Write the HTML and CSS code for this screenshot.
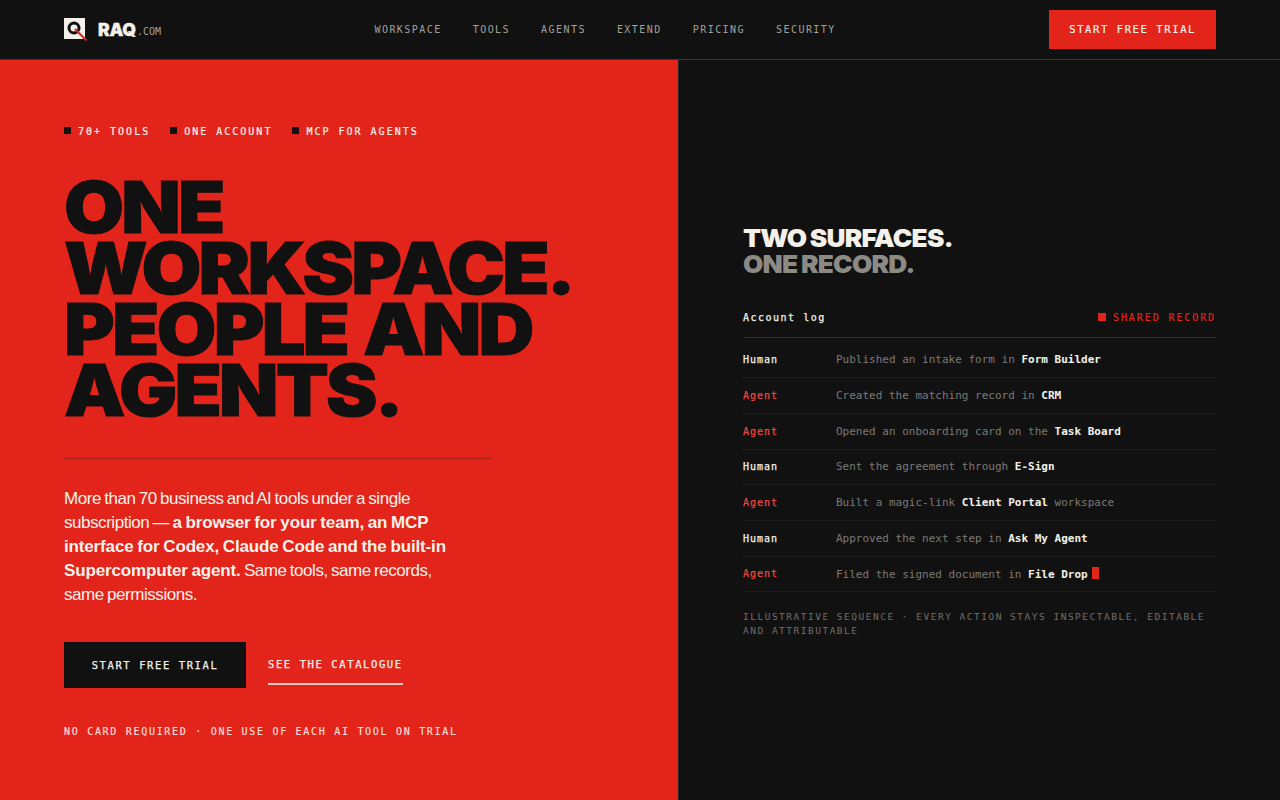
FILE: index.html

```html
<!DOCTYPE html>
<html lang="en">
<head>
  <meta name="viewport" content="width=device-width, initial-scale=1.0">
  <meta charset="UTF-8">
  <title>RAQ.com</title>
  <link rel="stylesheet" href="styles.css">
</head>
<body>
  <header class="topbar">
    <a class="brand" href="#">
      <svg class="brand-mark" width="23" height="23" viewBox="0 0 23 23">
        <rect x="0" y="0" width="21" height="21" fill="#f4f1ea"/>
        <circle cx="10" cy="10" r="5" fill="none" stroke="#111" stroke-width="3"/>
        <path d="M11 11 L22.5 22.5" stroke="#e3241a" stroke-width="2.2"/>
      </svg>
      <span class="brand-name">RAQ</span><span class="brand-tld">.COM</span>
    </a>
    <nav class="nav">
      <a href="#">WORKSPACE</a>
      <a href="#">TOOLS</a>
      <a href="#">AGENTS</a>
      <a href="#">EXTEND</a>
      <a href="#">PRICING</a>
      <a href="#">SECURITY</a>
    </nav>
    <a class="cta" href="#">START FREE TRIAL</a>
  </header>

  <main class="split">
    <section class="hero">
      <ul class="eyebrow">
        <li>70+ TOOLS</li>
        <li>ONE ACCOUNT</li>
        <li>MCP FOR AGENTS</li>
      </ul>
      <h1>ONE WORKSPACE. PEOPLE AND AGENTS.</h1>
      <hr class="hero-rule">
      <p class="lede">More than 70 business and AI tools under a single subscription — <strong>a browser for your team, an MCP interface for Codex, Claude Code and the built-in Supercomputer agent.</strong> Same tools, same records, same permissions.</p>
      <div class="actions">
        <a class="btn-dark" href="#">START FREE TRIAL</a>
        <a class="btn-line" href="#">SEE THE CATALOGUE</a>
      </div>
      <p class="fineprint">NO CARD REQUIRED · ONE USE OF EACH AI TOOL ON TRIAL</p>
    </section>

    <section class="surfaces">
      <h2>TWO SURFACES.<br><span>ONE RECORD.</span></h2>
      <div class="log-head">
        <span class="log-title">Account log</span>
        <span class="log-badge">SHARED RECORD</span>
      </div>
      <ul class="log">
        <li><span class="who">Human</span><span class="what">Published an intake form in <b>Form Builder</b></span></li>
        <li><span class="who agent">Agent</span><span class="what">Created the matching record in <b>CRM</b></span></li>
        <li><span class="who agent">Agent</span><span class="what">Opened an onboarding card on the <b>Task Board</b></span></li>
        <li><span class="who">Human</span><span class="what">Sent the agreement through <b>E-Sign</b></span></li>
        <li><span class="who agent">Agent</span><span class="what">Built a magic-link <b>Client Portal</b> workspace</span></li>
        <li><span class="who">Human</span><span class="what">Approved the next step in <b>Ask My Agent</b></span></li>
        <li><span class="who agent">Agent</span><span class="what">Filed the signed document in <b>File Drop</b><i class="cursor"></i></span></li>
      </ul>
      <p class="log-note">ILLUSTRATIVE SEQUENCE · EVERY ACTION STAYS INSPECTABLE, EDITABLE AND ATTRIBUTABLE</p>
    </section>
  </main>
</body>
</html>
```

FILE: styles.css

```css
* {
  box-sizing: border-box;
}
body {
  margin: 0;
  height: 800px;
  overflow: hidden;
  background-color: #111111;
  color: #f4f1ea;
  font-family: "Inter", sans-serif;
}
a {
  color: inherit;
  text-decoration: none;
}
ul {
  list-style: none;
  margin: 0;
  padding: 0;
}

/* Top bar */
.topbar {
  height: 60px;
  display: flex;
  justify-content: space-between;
  align-items: center;
  padding: 0 64px;
  border-bottom: 1px solid #3a3a38;
}
.brand {
  display: flex;
  align-items: center;
  width: 97px;
}
.brand-mark {
  margin-right: 11px;
}
.brand-name {
  font-weight: 900;
  font-size: 17.5px;
  letter-spacing: -0.2px;
  -webkit-text-stroke: 0.3px #f4f1ea;
}
.brand-tld {
  font-family: "DejaVu Sans Mono", monospace;
  font-size: 10px;
  color: #a3a19b;
  margin-top: 4px;
  margin-left: 1px;
}
.nav {
  display: flex;
  gap: 31px;
  font-family: "DejaVu Sans Mono", monospace;
  font-size: 10px;
  letter-spacing: 1.45px;
  color: #a3a19b;
}
.cta {
  background-color: #e3241a;
  padding: 13px 20px;
  font-family: "DejaVu Sans Mono", monospace;
  font-size: 10.5px;
  letter-spacing: 1.6px;
  line-height: 13px;
  -webkit-text-stroke: 0.2px #f4f1ea;
}

.split {
  display: grid;
  grid-template-columns: 678px 1fr;
  height: 740px;
}

/* Left panel */
.hero {
  background-color: #e3241a;
  padding: 66px 64px 0;
}
.eyebrow {
  display: flex;
  gap: 20px;
  font-family: "DejaVu Sans Mono", monospace;
  font-size: 10px;
  letter-spacing: 2px;
  line-height: 12px;
  -webkit-text-stroke: 0.2px #f4f1ea;
}
.eyebrow li::before {
  content: "";
  display: inline-block;
  width: 7px;
  height: 7px;
  background-color: #111111;
  margin-right: 7px;
  vertical-align: 1px;
}
h1 {
  margin: 39px 0 0;
  width: 530px;
  color: #111111;
  font-weight: 900;
  font-size: 71px;
  line-height: 61px;
  letter-spacing: -2.6px;
  word-spacing: 3px;
  -webkit-text-stroke: 1px #111111;
  transform: scaleX(1.09);
  transform-origin: left top;
}
.hero-rule {
  width: 428px;
  height: 1px;
  margin: 37px 0 0;
  border: none;
  background-color: #a81c14;
}
.lede {
  width: 400px;
  margin: 28px 0 0;
  font-family: "Liberation Sans", sans-serif;
  font-size: 17px;
  line-height: 24px;
  letter-spacing: -0.45px;
  word-spacing: -1px;
}
.lede strong {
  font-weight: 700;
  letter-spacing: -0.15px;
  word-spacing: -0.8px;
}
.actions {
  display: flex;
  align-items: flex-start;
  gap: 22px;
  margin-top: 35px;
  font-family: "DejaVu Sans Mono", monospace;
  font-size: 10.5px;
  letter-spacing: 1.6px;
  -webkit-text-stroke: 0.25px #f4f1ea;
}
.btn-dark {
  width: 182px;
  height: 46px;
  line-height: 47px;
  text-align: center;
  background-color: #111111;
}
.btn-line {
  height: 43px;
  line-height: 44px;
  border-bottom: 2px solid #f4c9c4;
}
.fineprint {
  margin: 38px 0 0;
  font-family: "DejaVu Sans Mono", monospace;
  font-size: 10px;
  letter-spacing: 1.7px;
  line-height: 12px;
  color: #fbdcd8;
  -webkit-text-stroke: 0.2px #fbdcd8;
}

/* Right panel */
.surfaces {
  padding: 165px 64px 0;
  border-left: 1px solid #2a2a28;
}
h2 {
  margin: 0;
  font-weight: 900;
  font-size: 25px;
  line-height: 26px;
  letter-spacing: -0.7px;
  word-spacing: -1px;
  transform: scaleX(1.05);
  transform-origin: left top;
}
h2 span {
  color: #8c8a84;
}
.log-head {
  display: flex;
  justify-content: space-between;
  align-items: center;
  margin-top: 23px;
  height: 38px;
  padding-bottom: 2px;
  border-bottom: 1px solid #2e2e2c;
  font-family: "DejaVu Sans Mono", monospace;
  font-size: 10px;
  letter-spacing: 1.5px;
}
.log-title {
  -webkit-text-stroke: 0.25px #f4f1ea;
}
.log-badge {
  color: #e3241a;
  letter-spacing: 1.9px;
  -webkit-text-stroke: 0.15px #e3241a;
}
.log-badge::before {
  content: "";
  display: inline-block;
  width: 8px;
  height: 8px;
  background-color: #e3241a;
  margin-right: 7px;
}
.log {
  margin-top: 4.5px;
}
.log li {
  display: flex;
  align-items: center;
  height: 35.7px;
  border-bottom: 1px solid #1d1d1b;
  font-family: "DejaVu Sans Mono", monospace;
}
.who {
  width: 93px;
  font-size: 10px;
  letter-spacing: 1px;
  -webkit-text-stroke: 0.25px #f4f1ea;
}
.who.agent {
  color: #e8483e;
  -webkit-text-stroke: 0.25px #e8483e;
}
.what {
  font-size: 11px;
  color: #7c7a75;
}
.what b {
  color: #f4f1ea;
}
.cursor {
  display: inline-block;
  width: 7px;
  height: 12px;
  margin-left: 4px;
  background-color: #e3241a;
  vertical-align: -1px;
}
.log-note {
  margin: 18px 0 0;
  font-family: "DejaVu Sans Mono", monospace;
  font-size: 9.5px;
  letter-spacing: 1.5px;
  line-height: 14px;
  color: #716f6a;
}
```
